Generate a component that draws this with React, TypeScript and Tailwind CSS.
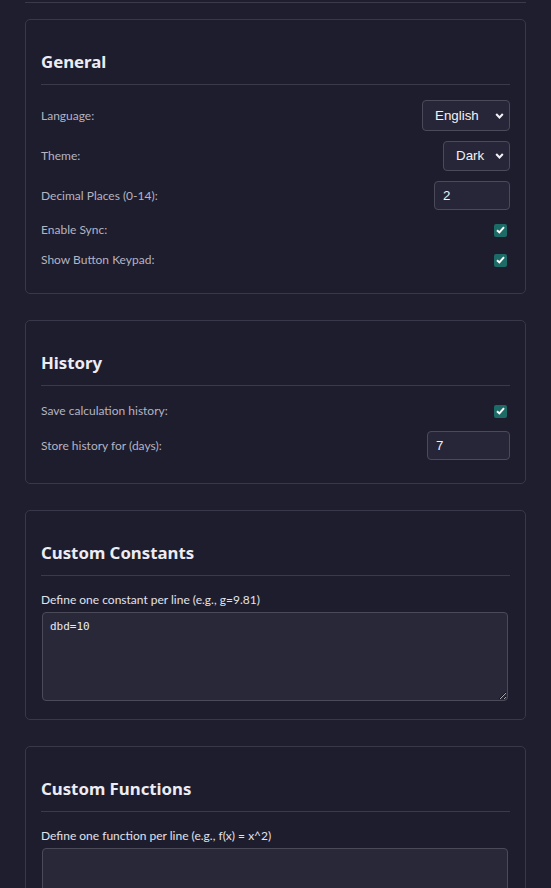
import React from "react";

const labelFont = { fontFamily: 'Lato, "Noto Sans", sans-serif' };
const headFont = { fontFamily: '"Noto Sans", Lato, sans-serif' };

function Chevron() {
  return (
    <svg
      width="9"
      height="7"
      viewBox="0 0 9 7"
      className="pointer-events-none absolute right-[6px] top-1/2 -translate-y-1/2"
    >
      <path d="M1.2 1.6 L4.5 4.9 L7.8 1.6" fill="none" stroke="#f2f2f6" strokeWidth="2.1" />
    </svg>
  );
}

function Select({ value, width }: { value: string; width: string }) {
  return (
    <div className={`relative ${width}`}>
      <div className="flex h-full items-center rounded-[4px] border border-[#4a4a5a] bg-[#262638] pl-[12px] font-['Liberation_Sans',Arial,sans-serif] text-[13.333px] text-[#f2f2f6]">
        {value}
      </div>
      <Chevron />
    </div>
  );
}

function NumberBox({ value, width }: { value: string; width: string }) {
  return (
    <div
      className={`flex h-[29px] items-center rounded-[4px] border border-[#4a4a5a] bg-[#262638] pl-[8px] font-['Liberation_Sans',Arial,sans-serif] text-[13.333px] text-[#f2f2f6] ${width}`}
    >
      {value}
    </div>
  );
}

function Check() {
  return (
    <span className="mr-[3px] flex h-[13px] w-[13px] items-center justify-center rounded-[2px] bg-[#1d6b66]">
      <svg width="9" height="8" viewBox="0 0 9 8">
        <path d="M1 4.2 L3.4 6.4 L8 1.2" fill="none" stroke="#ffffff" strokeWidth="2" />
      </svg>
    </span>
  );
}

function Row({ label, children, h }: { label: string; children: React.ReactNode; h: string }) {
  return (
    <div className={`mb-[10px] flex items-center justify-between ${h}`}>
      <span style={labelFont} className="text-[12px] text-[#b4b4c2]">
        {label}
      </span>
      {children}
    </div>
  );
}

function Card({ title, children }: { title: string; children: React.ReactNode }) {
  return (
    <section className="mb-[26px] rounded-[5px] border border-[#38384a] bg-[#1e1d2d] px-[15px] pb-[13px] pt-[30px]">
      <h2
        style={headFont}
        className="mb-[15px] border-b border-[#3a3a4c] pb-[10px] text-[16.8px] font-bold leading-[24px] text-[#ececf4]"
      >
        {title}
      </h2>
      {children}
    </section>
  );
}

function AreaField({ label, value }: { label: string; value: string }) {
  return (
    <div>
      <div style={labelFont} className="mb-[3px] text-[12px] leading-[18px] text-[#e2e2ea]">
        {label}
      </div>
      <textarea
        readOnly
        defaultValue={value}
        className="mb-[5px] ml-[1px] block h-[89px] w-[466px] rounded-[4px] border border-[#4a4a58] bg-[#282839] px-[7px] pb-[8px] pt-[7px] font-['DejaVu_Sans_Mono',monospace] text-[11px] leading-[14px] text-[#eaeaf2] outline-none"
      />
    </div>
  );
}

export default function App() {
  return (
    <main className="min-h-screen bg-[#1e1e2e] px-[25px]">
      <div className="mb-[16px] h-[3px] border-b border-[#3a3a4c]" />

      <Card title="General">
        <Row label="Language:" h="h-[31px]">
          <div className="h-[31px]">
            <Select value="English" width="w-[88px] h-full" />
          </div>
        </Row>
        <Row label="Theme:" h="h-[30px]">
          <div className="h-[30px]">
            <Select value="Dark" width="w-[67px] h-full" />
          </div>
        </Row>
        <Row label="Decimal Places (0-14):" h="h-[29px]">
          <NumberBox value="2" width="w-[76px]" />
        </Row>
        <Row label="Enable Sync:" h="h-[20px]">
          <Check />
        </Row>
        <Row label="Show Button Keypad:" h="h-[20px]">
          <Check />
        </Row>
      </Card>

      <Card title="History">
        <Row label="Save calculation history:" h="h-[20px]">
          <Check />
        </Row>
        <Row label="Store history for (days):" h="h-[29px]">
          <NumberBox value="7" width="w-[83px]" />
        </Row>
      </Card>

      <Card title="Custom Constants">
        <AreaField label="Define one constant per line (e.g., g=9.81)" value="dbd=10" />
      </Card>

      <Card title="Custom Functions">
        <AreaField label="Define one function per line (e.g., f(x) = x^2)" value="" />
      </Card>
    </main>
  );
}
